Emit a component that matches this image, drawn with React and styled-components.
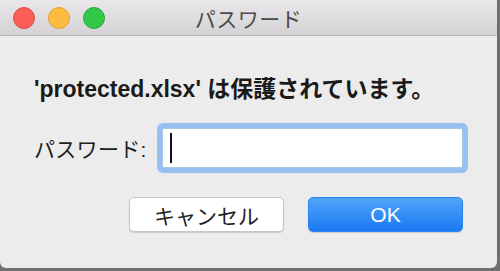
import React from 'react';
import styled, { createGlobalStyle } from 'styled-components';

const GlobalStyle = createGlobalStyle`
  html, body {
    margin: 0;
    padding: 0;
    width: 500px;
    height: 271px;
    overflow: hidden;
    background: #6f6f6f;
  }
  #root {
    width: 500px;
    height: 271px;
  }
`;

const jpFont = `"Liberation Sans", "Noto Sans CJK JP", sans-serif`;

const Window = styled.div`
  width: 497px;
  height: 268px;
  background: #ececec;
  border-radius: 0 0 6px 6px;
  display: flex;
  flex-direction: column;
  overflow: hidden;
  font-family: ${jpFont};
`;

const TitleBar = styled.div`
  height: 35px;
  flex: none;
  display: grid;
  grid-template-columns: 1fr auto 1fr;
  align-items: center;
  background: linear-gradient(#e9e7e9, #d4d2d4);
  border-bottom: 1px solid #b4b4b4;
  padding: 0 13px;
`;

const Lights = styled.div`
  display: flex;
  gap: 13px;
  align-items: center;
`;

const Light = styled.span`
  width: 22px;
  height: 22px;
  border-radius: 50%;
  box-sizing: border-box;
  background: ${(p) => p.$color};
  border: 1px solid ${(p) => p.$edge};
`;

const Title = styled.div`
  font-size: 21px;
  color: #4b4b4b;
  letter-spacing: 0.5px;
`;

const Body = styled.div`
  flex: 1;
  display: flex;
  flex-direction: column;
  padding: 40px 28px 0 34px;
`;

const Heading = styled.div`
  font-size: 23px;
  line-height: 26px;
  font-weight: bold;
  color: #1a1a1a;
  white-space: nowrap;
`;

const FieldRow = styled.div`
  display: flex;
  align-items: center;
  margin-top: 21px;
  gap: 9px;
`;

const Label = styled.div`
  font-size: 21px;
  color: #1f1f1f;
  width: 114px;
  white-space: nowrap;
  letter-spacing: 0.3px;
`;

const Field = styled.div`
  box-sizing: border-box;
  width: 311px;
  height: 50px;
  border-radius: 6px;
  background: #96c0ef;
  padding: 5px;
  display: flex;
`;

const FieldInner = styled.div`
  flex: 1;
  background: #fff;
  border: 1px solid #a9c3e3;
  display: flex;
  align-items: center;
  padding-left: 7px;
`;

const Caret = styled.span`
  width: 2px;
  height: 30px;
  background: #111;
`;

const Buttons = styled.div`
  display: flex;
  justify-content: flex-end;
  gap: 24px;
  margin-top: 24px;
  padding-right: 6px;
`;

const Button = styled.button`
  box-sizing: border-box;
  width: 155px;
  height: 35px;
  border-radius: 5px;
  font-family: ${jpFont};
  font-size: 21px;
  padding: 0;
  cursor: pointer;
  color: ${(p) => (p.$primary ? '#fff' : '#222')};
  background: ${(p) =>
    p.$primary ? 'linear-gradient(#4fa5f9, #1b79f2)' : '#fff'};
  border: 1px solid ${(p) => (p.$primary ? '#2a84f3' : '#c6c6c6')};
  box-shadow: 0 1px 1px rgba(0, 0, 0, 0.15);
`;

export default function App() {
  return (
    <>
      <GlobalStyle />
      <Window>
        <TitleBar>
          <Lights>
            <Light $color="#fc5f5a" $edge="#e2463f" />
            <Light $color="#fdbc3f" $edge="#e0a02a" />
            <Light $color="#33c748" $edge="#20a935" />
          </Lights>
          <Title>パスワード</Title>
          <div />
        </TitleBar>
        <Body>
          <Heading>'protected.xlsx' は保護されています。</Heading>
          <FieldRow>
            <Label>パスワード:</Label>
            <Field>
              <FieldInner>
                <Caret />
              </FieldInner>
            </Field>
          </FieldRow>
          <Buttons>
            <Button>キャンセル</Button>
            <Button $primary>OK</Button>
          </Buttons>
        </Body>
      </Window>
    </>
  );
}
